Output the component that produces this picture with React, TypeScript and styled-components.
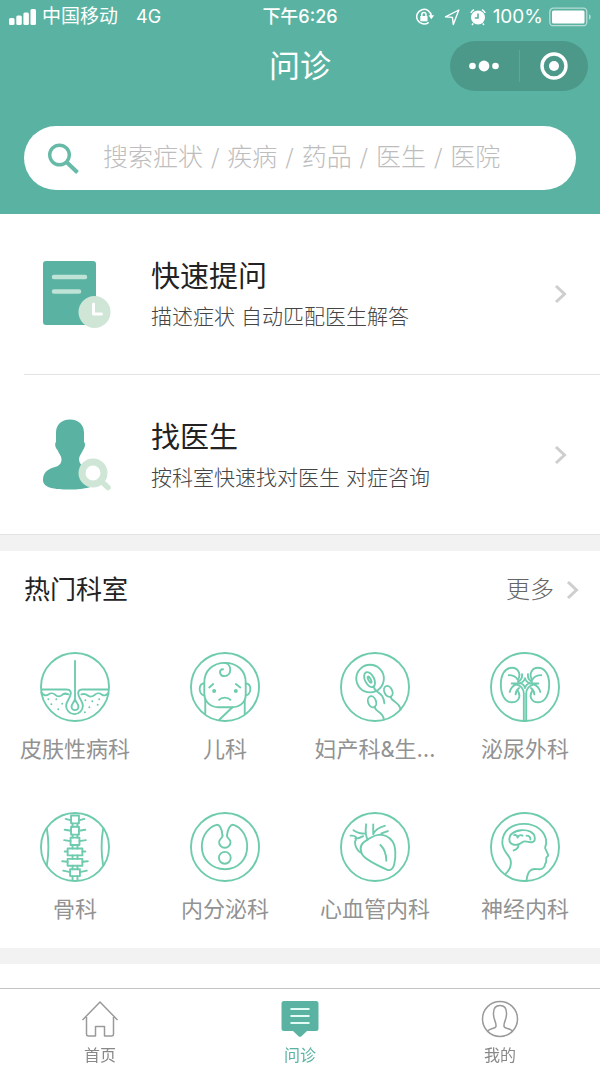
import React from "react";
import styled, { createGlobalStyle, css } from "styled-components";

const teal = "#5ab3a2";
const mint = "#6ecbad";
const pale = "#cfe5d6";

const Global = createGlobalStyle`
  *, *::before, *::after { box-sizing: border-box; }
  body {
    margin: 0;
    background: #fff;
    font-family: Inter, "Noto Sans CJK SC", sans-serif;
    color: #222;
  }
  button, input { font: inherit; color: inherit; }
`;

const Page = styled.div`
  display: flex;
  flex-direction: column;
  min-height: 100vh;
`;

const Header = styled.header`
  background: ${teal};
  color: #fff;
  padding-bottom: 24px;
`;

const ThreeColumns = styled.div`
  display: grid;
  grid-template-columns: 1fr auto 1fr;
  align-items: center;
`;

const StatusBar = styled(ThreeColumns)`
  height: 34px;
  padding: 0 8px;
  font-size: 19px;
  line-height: 24px;
`;

const StatusGroup = styled.div<{ $end?: boolean }>`
  display: flex;
  align-items: center;
  gap: 6px;
  justify-content: ${(p) => (p.$end ? "flex-end" : "flex-start")};
`;

const Network = styled.span`
  margin-left: 12px;
  font-size: 18px;
`;

const Clock = styled.time`
  font-size: 18px;
  font-weight: 500;
`;

const NavBar = styled(ThreeColumns)`
  height: 64px;
  padding: 0 12px;
`;

const NavTitle = styled.h1`
  grid-column: 2;
  margin: 0;
  font-size: 31px;
  line-height: 40px;
  font-weight: 400;
`;

const Capsule = styled.div`
  justify-self: end;
  display: flex;
  align-items: center;
  width: 138px;
  height: 50px;
  border-radius: 25px;
  background: #4c9989;
`;

const CapsuleButton = styled.button`
  flex: 1;
  display: flex;
  align-items: center;
  justify-content: center;
  height: 32px;
  padding: 0;
  border: 0;
  background: none;
  & + & { border-left: 1px solid #5fa698; }
`;

const SearchBox = styled.label`
  display: flex;
  align-items: center;
  gap: 24px;
  height: 64px;
  margin: 28px 24px 0;
  padding: 0 24px;
  border-radius: 32px;
  background: #fff;
`;

const SearchInput = styled.input`
  flex: 1;
  min-width: 0;
  padding: 0;
  border: 0;
  outline: 0;
  background: none;
  color: #333;
  font-family: "DejaVu Sans", "Noto Sans CJK SC", sans-serif;
  font-size: 25px;
  line-height: 32px;
  font-weight: 300;
  &::placeholder { color: #bdbdbd; opacity: 1; }
`;

const EntryList = styled.nav`
  border-bottom: 1px solid #e4e4e4;
`;

const Entry = styled.a`
  display: flex;
  align-items: center;
  height: 160px;
  margin-left: 24px;
  padding-right: 32px;
  color: inherit;
  text-decoration: none;
  & + & { border-top: 1px solid #e4e4e4; }
`;

const EntryArt = styled.span`
  display: flex;
  width: 127px;
  padding-left: 16px;
`;

const EntryText = styled.span`
  flex: 1;
  min-width: 0;
  padding-top: 2px;
`;

const EntryTitle = styled.strong`
  display: block;
  font-size: 29px;
  line-height: 44px;
  font-weight: 400;
`;

const EntryNote = styled.span`
  display: block;
  font-size: 21px;
  line-height: 36px;
  font-weight: 300;
  color: #444;
`;

const Band = styled.div`
  height: 16px;
  background: #f2f2f2;
`;

const SectionHead = styled.div`
  display: flex;
  align-items: center;
  justify-content: space-between;
  height: 77px;
  padding: 0 20px 0 24px;
`;

const SectionTitle = styled.h2`
  margin: 0;
  font-size: 26px;
  line-height: 36px;
  font-weight: 400;
`;

const MoreLink = styled.a`
  display: flex;
  align-items: center;
  gap: 12px;
  font-size: 24px;
  line-height: 36px;
  font-weight: 300;
  color: #666;
  text-decoration: none;
`;

const DepartmentGrid = styled.div`
  display: grid;
  grid-template-columns: repeat(4, minmax(0, 1fr));
`;

const Department = styled.a`
  display: flex;
  flex-direction: column;
  align-items: center;
  height: 160px;
  padding: 23px 8px 0;
  color: #929292;
  text-decoration: none;
`;

const DepartmentName = styled.span`
  max-width: 100%;
  margin-top: 8px;
  font-size: 22px;
  line-height: 36px;
  white-space: nowrap;
`;

const NextSection = styled.section`
  flex: 1;
  min-height: 24px;
`;

const TabBar = styled.nav`
  position: sticky;
  bottom: 0;
  display: grid;
  grid-template-columns: repeat(3, 1fr);
  height: 78px;
  border-top: 1px solid #c4c4c4;
  background: #fff;
`;

const Tab = styled.a<{ $active?: boolean }>`
  display: flex;
  flex-direction: column;
  align-items: center;
  padding-top: 10px;
  font-size: 16px;
  line-height: 24px;
  color: #888;
  text-decoration: none;
  ${(p) => p.$active && css`color: ${teal};`}
  svg { margin-bottom: 4px; }
`;

const Chevron = () => (
  <svg width="14" height="20" viewBox="0 0 14 20" fill="none" stroke="#cecece" strokeWidth="3" aria-hidden="true">
    <path d="M2 2l8.500 8L2 18" />
  </svg>
);

const QuestionArt = () => (
  <svg width="72" height="72" viewBox="0 0 72 72" aria-hidden="true">
    <rect x="3" y="3" width="53" height="64" rx="3" fill={teal} />
    <path d="M14 19h31M14 33.500h25" stroke="#bfe3d6" strokeWidth="4.500" strokeLinecap="round" />
    <circle cx="54.500" cy="54" r="16" fill={pale} />
    <path d="M53.500 46v10h8" stroke="#fff" strokeWidth="3" fill="none" strokeLinecap="round" strokeLinejoin="round" />
  </svg>
);

const DoctorArt = () => (
  <svg width="72" height="72" viewBox="0 0 72 72" aria-hidden="true">
    <path
      fill={teal}
      d="M30 .500C39 .500 44 6 44 14V23C45.800 24 45 29 43 31C42 34 39 37 39 40C39 46 44 48 50 49.500C57 51.500 57.500 56 57.500 61C57.500 68 44 70.500 30 70.500C14 70.500 3 69 3 61C3 53 8 50 15 48C20 46.500 21.500 44 21.500 40C21.500 37 18.500 34 17.500 31C15 29 14.500 24 16 23V14C16 6 21 .500 30 .500z"
    />
    <circle cx="53" cy="54" r="11" fill="#fff" stroke={pale} strokeWidth="7" />
    <path d="M62 63l6 5.500" stroke={pale} strokeWidth="5.500" strokeLinecap="round" />
  </svg>
);

const Signal = () => (
  <svg width="28" height="18" viewBox="0 0 28 18" fill="#fff" aria-hidden="true">
    <rect x="1" y="10" width="5.500" height="7" rx="1.500" />
    <rect x="8.300" y="7.500" width="5.500" height="9.500" rx="1.500" />
    <rect x="15.400" y="4.500" width="5.500" height="12.500" rx="1.500" />
    <rect x="22.500" y="1" width="5.500" height="16" rx="1.500" />
  </svg>
);

const StatusIcons = () => (
  <svg width="72" height="18" viewBox="0 0 72 18" fill="none" stroke="#fff" strokeWidth="1.500" aria-hidden="true">
    <path d="M13.700 14.300A7.300 7.300 0 1 1 16.300 8" />
    <path d="M13.600 7.200h5.600l-2.900 4z" fill="#fff" stroke="none" />
    <rect x="5.300" y="8" width="7.200" height="5.300" fill="#fff" stroke="none" />
    <path d="M6.800 8V6.500a2.100 2.100 0 0 1 4.200 0V8" />
    <path d="M30.500 8.800L43.800 2 38.300 16.500 37.400 9.400z" strokeWidth="1.400" strokeLinejoin="round" />
    <circle cx="63" cy="9.500" r="7" fill="#fff" stroke="none" />
    <path d="M55.800 5A9 9 0 0 1 59 1.600M67 1.600A9 9 0 0 1 70.200 5M58.200 15.500l-1.200 1.500M67.800 15.500l1.200 1.500" />
    <path d="M63 5.500v4.500h-3.200" stroke={teal} strokeWidth="1.600" />
  </svg>
);

const Battery = () => (
  <svg width="43" height="20" viewBox="0 0 43 20" fill="none" aria-hidden="true">
    <rect x=".8" y="1.200" width="37" height="17.500" rx="3.500" stroke="#b5ddd4" strokeWidth="1.300" />
    <rect x="3" y="3.500" width="32.500" height="13" rx="1.500" fill="#fff" />
    <path d="M40 7.300c2.300.8 2.300 4.600 0 5.400z" fill="#b5ddd4" />
  </svg>
);

const IconDots = () => (
  <svg width="32" height="14" viewBox="0 0 32 14" fill="#fff" aria-hidden="true">
    <circle cx="4.500" cy="7" r="3.300" />
    <circle cx="16" cy="7" r="5.400" />
    <circle cx="27.500" cy="7" r="3.300" />
  </svg>
);

const IconTarget = () => (
  <svg width="30" height="30" viewBox="0 0 30 30" aria-hidden="true">
    <circle cx="15" cy="15" r="12" fill="none" stroke="#fff" strokeWidth="3.400" />
    <circle cx="15" cy="15" r="5" fill="#fff" />
  </svg>
);

const IconSearch = () => (
  <svg width="31" height="31" viewBox="0 0 31 31" fill="none" stroke="#67baa8" aria-hidden="true">
    <circle cx="11.500" cy="12" r="9.800" strokeWidth="3.400" />
    <path d="M19 19.500l10.500 10" strokeWidth="4" />
  </svg>
);

const drawings: Record<string, React.ReactNode> = {
  skin: (
    <>
      <path d="M35.500 9v41" />
      <path d="M2 38h25c4 0 5 3 3.800 6-1 4-4.300 6-4.300 10.500a8.500 8.500 0 0 0 17 0c0-4.500-3.300-6.500-4.300-10.500-1.200-3-.2-6 3.800-6h26" />
      <path d="M35.500 48c-1 3-3.500 4.500-3.500 7.500a3.500 3.500 0 0 0 7 0c0-3-2.500-4.500-3.500-7.500z" />
      <path d="M1.500 41c2 3.500 5 3.500 7 2s5-1.500 7 .5 5 2 7 0 3.500-1.500 6.500-.5M42 43c3-1 4.500-.5 6.500 1s5 1.500 7-.5 5-2 7-.5 4.500 1.500 6-1" />
      <path
        d="M8.500 48h.01M16.500 48h.01M11.500 53h.01M22.500 52.500h.01M18.500 58h.01M46 49h.01M53 50h.01M60 48h.01M50 56h.01M58.500 53.500h.01M45.500 61h.01"
        strokeWidth="2"
      />
    </>
  ),
  baby: (
    <>
      <path d="M14.500 42V31C14.500 19 23 11 35.500 11S56.500 19 56.500 31v12c0 9-7 13-14 13h-14c-7 0-14-5-14-14z" />
      <path d="M14.500 32c-6-1-6.500 11 0 12M56.500 32c6-1 6.500 11 0 12M15.500 48v14M55.500 49v14M43 56L29.500 69" />
      <path d="M35 11c8 1 7.500 13.500 0 13.500-5 0-6.500-7-1.500-7" />
      <path d="M19.500 36l4-3.500M51 36l-4.500-3.500M29.500 48.500c2.500-3 9-3 11.500 0" />
      <path d="M24.500 39.500h.01M46.500 39.500h.01" strokeWidth="4" />
    </>
  ),
  fertility: (
    <>
      <circle cx="30.500" cy="27" r="14" />
      <ellipse cx="30" cy="28" rx="4.600" ry="8.200" transform="rotate(-27 30 28)" />
      <ellipse cx="30" cy="28" rx="1.200" ry="3.500" transform="rotate(-27 30 28)" />
      <path d="M34 35c2 8 10 4.500 11 17" />
      <ellipse cx="49" cy="40" rx="4" ry="5.800" transform="rotate(-25 49 40)" />
      <path d="M51.500 45.500c0 5 8 4 10 13" />
      <ellipse cx="32.500" cy="50.500" rx="4" ry="5.800" transform="rotate(-20 32.500 50.500)" />
      <path d="M35.500 56.500c1 5 8 3.500 9 12" />
    </>
  ),
  kidney: (
    <>
      <path d="M28.500 28C32 22 28 16 22.500 16 15 16 11 23 11 33s4 18 11 18c7 0 10-6 6-12M42.500 28C39 22 43 16 48.500 16 56 16 60 23 60 33s-4 18-11 18c-7 0-10-6-6-12" />
      <path d="M19 23.500c4 0 7 1 9 4.500M52 23.500c-4 0-7 1-9 4.500M22 32h8M49 32h-8M20 40.500c1-4 3-6.500 7-8M51 40.500c-1-4-3-6.500-7-8M26 43c0-3 1.500-5 3.500-6.500M45 43c0-3-1.500-5-3.500-6.500M32.500 22.500c.5 4-1 6-4 7.500M38.500 22.500c-.5 4 1 6 4 7.500" />
      <path d="M30.500 31.500q4-1 5-5q1 4 5 5q-4 1-5 5q-1-4-5-5M27 33c4 1 7 4 7.300 9V70M44 33c-4 1-7 4-7.300 9V70" />
    </>
  ),
  spine: (
    <>
      <path d="M7 17c2 12 2 25 0 37M64 17c-2 12-2 25 0 37" />
      <path d="M31.500 3.500h8v8h-8zM31.500 15h8v8h-8zM31 26h9v7.500h-9zM28 37h15v7H28zM28 47.500h15v7H28zM30.500 58h10v7h-10z" />
      <path d="M31.500 8.500L26 7M39.500 8.500L45 7M31.500 19l-6.500-1M39.500 19l6.500-1M31 29.500l-6.500-1M40 29.500l6.500-1M28 40h-3M43 40h3M28 50.500l-5.500-.5M43 50.500l5.500-.5M30.500 61l-7-1.500M40.500 61l7-1.500M33 11.500V15M38 11.500V15M33 23v3M38 23v3M33 33.500V37M38 33.500V37M33 44v3.500M38 44v3.500M33 54.500V58M38 54.500V58M33 65v4M38 65v4" />
    </>
  ),
  gland: (
    <>
      <path d="M33 24c-.5-7-3-11.500-6-11C19 15 12 24 12 35c0 13 10 23 23.500 23S58 48 58 35c0-11-6.500-20-14-22-3-.5-6 4-6.500 11" />
      <path d="M33 24c0 3-3.500 3-3.500 6.500a5.800 5.800 0 0 0 11.600 0C41.100 27 37.500 27 37.500 24" />
      <circle cx="35.300" cy="46.500" r="6" />
    </>
  ),
  heart: (
    <>
      <path d="M28 28C22 31 19.500 36 22 42C24 48 42 56 47.500 58.500C51 60 54 57.500 55 53C57 45 56.500 34 53 29.500C49.500 25 45 23 40 23C34 23.500 31.500 26 28 28" />
      <path d="M41 33.500c4 4 6 10 6 16M13.700 18.500c3.500 2.500 7.500 3.500 12 3.500M26.500 12.500c-.5 5-1.500 10 1.500 15.500M10.700 24c5-.5 7.500 2 4.500 6 0 5 1.500 8.500 5.500 11M15.500 27c3 0 5.500-1 8-2.500M33.700 12.500v10M45.500 14c-6 1.500-10 4-11.800 8.500M48.500 19.300l-6.500 2.500" />
    </>
  ),
  brain: (
    <>
      <path d="M16 62.500c5-5 6.500-9 4.500-15-2-5-8-8-8-16.500C12.500 19 22 12 34.500 12S57 20 57 31c0 3-1.500 4-1 6l3 6.500c.5 1.500-2 2-2 3 0 2.500.5 4-1 6-.500 5-4 6-8 5.500-7-1-10 2-11 12" />
      <path d="M22.500 32.500C18.500 31 18.500 24 23 21.500C27 18 36 17.500 41 20C46 22.500 47 29.500 43 30.500C40 31.500 38 29 34 30C31 32.500 27 34.500 22.500 32.500M29 33c0 3-2 5-5 6M24.500 23.500c2-.5 3 .5 3.500 2.500M28 26c1-2.500 3-3 5-2M37 24c3 0 4 1.500 4 4" />
    </>
  ),
};

const DepartmentIcon = ({ name }: { name: string }) => (
  <svg
    width="72"
    height="72"
    viewBox="-1 -1 73 73"
    fill="none"
    stroke={mint}
    strokeWidth="1.900"
    strokeLinecap="round"
    strokeLinejoin="round"
    aria-hidden="true"
  >
    <circle cx="35.500" cy="35.500" r="34.500" />
    {drawings[name]}
  </svg>
);

const HomeIcon = () => (
  <svg width="38" height="40" viewBox="0 0 38 40" fill="none" stroke="#9a9a9a" strokeWidth="1.500" strokeLinejoin="round" aria-hidden="true">
    <path d="M1.500 21L19 3l17.500 18M5.500 18v17q0 2 2 2h7V27.500h9V37h7q2 0 2-2V18" />
  </svg>
);

const ConsultIcon = () => (
  <svg width="38" height="40" viewBox="0 0 38 40" aria-hidden="true">
    <path d="M3 2h32a2.500 2.500 0 0 1 2.500 2.500v25A2.500 2.500 0 0 1 35 32H26l-5.500 5.300q-1.500 1-3 0L12 32H3a2.500 2.500 0 0 1-2.500-2.500v-25A2.500 2.500 0 0 1 3 2z" fill={teal} />
    <path d="M9.500 10h19M9.500 17h19M9.500 24h19" stroke="#e2fbf4" strokeWidth="2.200" />
  </svg>
);

const ProfileIcon = () => (
  <svg width="38" height="40" viewBox="0 0 38 40" fill="none" stroke="#9a9a9a" strokeWidth="1.500" aria-hidden="true">
    <ellipse cx="19" cy="20" rx="17.500" ry="17.500" />
    <path d="M6.500 32c3-3 8-2 8.500-4.500.5-5-3-7-2.500-13.500 0-5 2.500-7.500 6.500-7.500s6.500 2.500 6.500 7.500c.5 6.500-3 8.500-2.500 13.500.5 2.500 5.500 1.500 8.500 4.500" />
  </svg>
);

const departments = [
  { icon: "skin", name: "皮肤性病科" },
  { icon: "baby", name: "儿科" },
  { icon: "fertility", name: "妇产科&生…" },
  { icon: "kidney", name: "泌尿外科" },
  { icon: "spine", name: "骨科" },
  { icon: "gland", name: "内分泌科" },
  { icon: "heart", name: "心血管内科" },
  { icon: "brain", name: "神经内科" },
];

const entries = [
  { art: <QuestionArt />, title: "快速提问", note: "描述症状 自动匹配医生解答" },
  { art: <DoctorArt />, title: "找医生", note: "按科室快速找对医生 对症咨询" },
];

export default function App() {
  return (
    <Page lang="zh-CN">
      <Global />
      <Header>
        <StatusBar>
          <StatusGroup>
            <Signal />
            <span>中国移动</span>
            <Network>4G</Network>
          </StatusGroup>
          <Clock>下午6:26</Clock>
          <StatusGroup $end>
            <StatusIcons />
            <span>100%</span>
            <Battery />
          </StatusGroup>
        </StatusBar>
        <NavBar>
          <NavTitle>问诊</NavTitle>
          <Capsule>
            <CapsuleButton type="button" aria-label="更多操作"><IconDots /></CapsuleButton>
            <CapsuleButton type="button" aria-label="关闭"><IconTarget /></CapsuleButton>
          </Capsule>
        </NavBar>
        <SearchBox>
          <IconSearch />
          <SearchInput type="text" aria-label="搜索" placeholder="搜索症状 / 疾病 / 药品 / 医生 / 医院" />
        </SearchBox>
      </Header>
      <main>
        <EntryList>
          {entries.map((e) => (
            <Entry href="#" key={e.title}>
              <EntryArt>{e.art}</EntryArt>
              <EntryText>
                <EntryTitle>{e.title}</EntryTitle>
                <EntryNote>{e.note}</EntryNote>
              </EntryText>
              <Chevron />
            </Entry>
          ))}
        </EntryList>
        <Band />
        <section>
          <SectionHead>
            <SectionTitle>热门科室</SectionTitle>
            <MoreLink href="#">更多<Chevron /></MoreLink>
          </SectionHead>
          <DepartmentGrid>
            {departments.map((d) => (
              <Department href="#" key={d.icon}>
                <DepartmentIcon name={d.icon} />
                <DepartmentName>{d.name}</DepartmentName>
              </Department>
            ))}
          </DepartmentGrid>
        </section>
        <Band />
      </main>
      <NextSection />
      <TabBar>
        <Tab href="#"><HomeIcon />首页</Tab>
        <Tab href="#" $active aria-current="page"><ConsultIcon />问诊</Tab>
        <Tab href="#"><ProfileIcon />我的</Tab>
      </TabBar>
    </Page>
  );
}
